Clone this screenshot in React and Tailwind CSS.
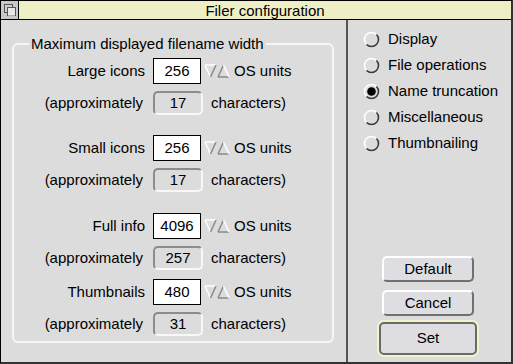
import React from "react";

const font = { fontFamily: '"Liberation Sans", Arial, sans-serif' };

const BackIcon = () => (
  <svg width="14" height="14" viewBox="0 0 14 14">
    <rect x="1.5" y="1.5" width="8" height="8" fill="#cfcfcf" stroke="#555" />
    <rect x="4.5" y="4.5" width="8" height="8" fill="#e6e6e6" stroke="#555" />
    <line x1="5" y1="12" x2="12" y2="12" stroke="#fff" />
  </svg>
);

const Arrows = () => (
  <svg width="26" height="18" viewBox="0 0 26 18">
    {/* down arrow */}
    <line x1="1" y1="3" x2="12" y2="3" stroke="#fff" strokeWidth="1.5" />
    <line x1="1" y1="3" x2="6.5" y2="15" stroke="#fff" strokeWidth="1.5" />
    <line x1="12" y1="3" x2="6.5" y2="15" stroke="#8a8a8a" strokeWidth="1.5" />
    {/* up arrow */}
    <line x1="14" y1="15" x2="25" y2="15" stroke="#8a8a8a" strokeWidth="1.5" />
    <line x1="14" y1="15" x2="19.5" y2="3" stroke="#8a8a8a" strokeWidth="1.5" />
    <line x1="25" y1="15" x2="19.5" y2="3" stroke="#fff" strokeWidth="1.5" />
  </svg>
);

const Radio = ({ on }) => (
  <svg width="17" height="17" viewBox="0 0 17 17">
    <circle cx="8.5" cy="8.5" r="7" fill="#dcdcdc" />
    <path d="M13.45 3.55 A7 7 0 0 0 3.55 13.45" fill="none" stroke="#fff" strokeWidth="1.6" />
    <path d="M13.45 3.55 A7 7 0 0 1 3.55 13.45" fill="none" stroke="#3a3a3a" strokeWidth="1.6" />
    {on && <circle cx="8.5" cy="8.5" r="4.3" fill="#000" />}
  </svg>
);

const groups = [
  { label: "Large icons", value: "256", chars: "17", mt: "mt-[6px]" },
  { label: "Small icons", value: "256", chars: "17", mt: "mt-[20px]" },
  { label: "Full info", value: "4096", chars: "257", mt: "mt-[21px]" },
  { label: "Thumbnails", value: "480", chars: "31", mt: "mt-[9px]" },
];

const options = [
  "Display",
  "File operations",
  "Name truncation",
  "Miscellaneous",
  "Thumbnailing",
];

const Button = ({ children }) => (
  <div className="w-[92px] h-[26px] rounded-[5px] border-2 border-t-white border-l-white border-b-[#707070] border-r-[#707070] bg-[#dedee2] flex items-center justify-center text-[15px] text-black">
    {children}
  </div>
);

export default function App() {
  return (
    <div
      style={font}
      className="w-[513px] h-[364px] bg-[#dcdcdc] border border-black border-b-2 border-r-2 border-b-[#333] border-r-[#333] flex flex-col overflow-hidden text-[15px] text-black"
    >
      {/* title bar */}
      <div className="h-[19px] flex border-b border-black shrink-0">
        <div className="w-[18px] bg-[#c8c8c8] flex items-center justify-center border-r border-black">
          <BackIcon />
        </div>
        <div className="flex-1 bg-[#efefc6] flex items-center justify-center leading-none">
          Filer configuration
        </div>
      </div>

      <div className="flex flex-1">
        {/* left pane */}
        <div className="w-[345px] pl-[11px]">
          <fieldset className="mt-[15px] w-[322px] border-2 border-[#f6f6f6] rounded-[6px] pb-[5px]">
            <legend className="ml-[15px] px-[2px] leading-[17px]">
              Maximum displayed filename width
            </legend>
            {groups.map((g) => (
              <div key={g.label}>
                <div className={`${g.mt} flex items-center h-[26px]`}>
                  <div className="w-[131px] text-right">{g.label}</div>
                  <div className="ml-[8px] w-[48px] h-[26px] bg-white border border-black flex items-center justify-center">
                    {g.value}
                  </div>
                  <div className="ml-[3px] flex items-center">
                    <Arrows />
                  </div>
                  <div className="ml-[4px]">OS units</div>
                </div>
                <div className="mt-[7px] flex items-center h-[24px]">
                  <div className="w-[131px] text-right pr-[2px]">(approximately</div>
                  <div className="ml-[8px] w-[50px] h-[24px] rounded-[5px] border-2 border-t-[#8c8c8c] border-l-[#8c8c8c] border-b-[#f8f8f8] border-r-[#f8f8f8] flex items-center justify-center">
                    {g.chars}
                  </div>
                  <div className="ml-[8px]">characters)</div>
                </div>
              </div>
            ))}
          </fieldset>
        </div>

        {/* separator */}
        <div className="w-[2px] bg-[#555]" />

        {/* right pane */}
        <div className="flex-1 flex flex-col pt-[6px] pb-[5px]">
          {options.map((o) => (
            <div key={o} className="h-[26px] flex items-center pl-[15px]">
              <Radio on={o === "Name truncation"} />
              <span className="ml-[8px]">{o}</span>
            </div>
          ))}
          <div className="mt-auto flex flex-col pl-[34px]">
            <Button>Default</Button>
            <div className="mt-[8px]">
              <Button>Cancel</Button>
            </div>
            <div className="mt-[4px] -ml-[5px] w-[102px] h-[37px] rounded-[7px] border-2 border-[#f2f2cc] flex">
              <div className="flex-1 rounded-[5px] border-2 border-[#6a6a6a] bg-[#dedee2] flex items-center justify-center">
                Set
              </div>
            </div>
          </div>
        </div>
      </div>
    </div>
  );
}
